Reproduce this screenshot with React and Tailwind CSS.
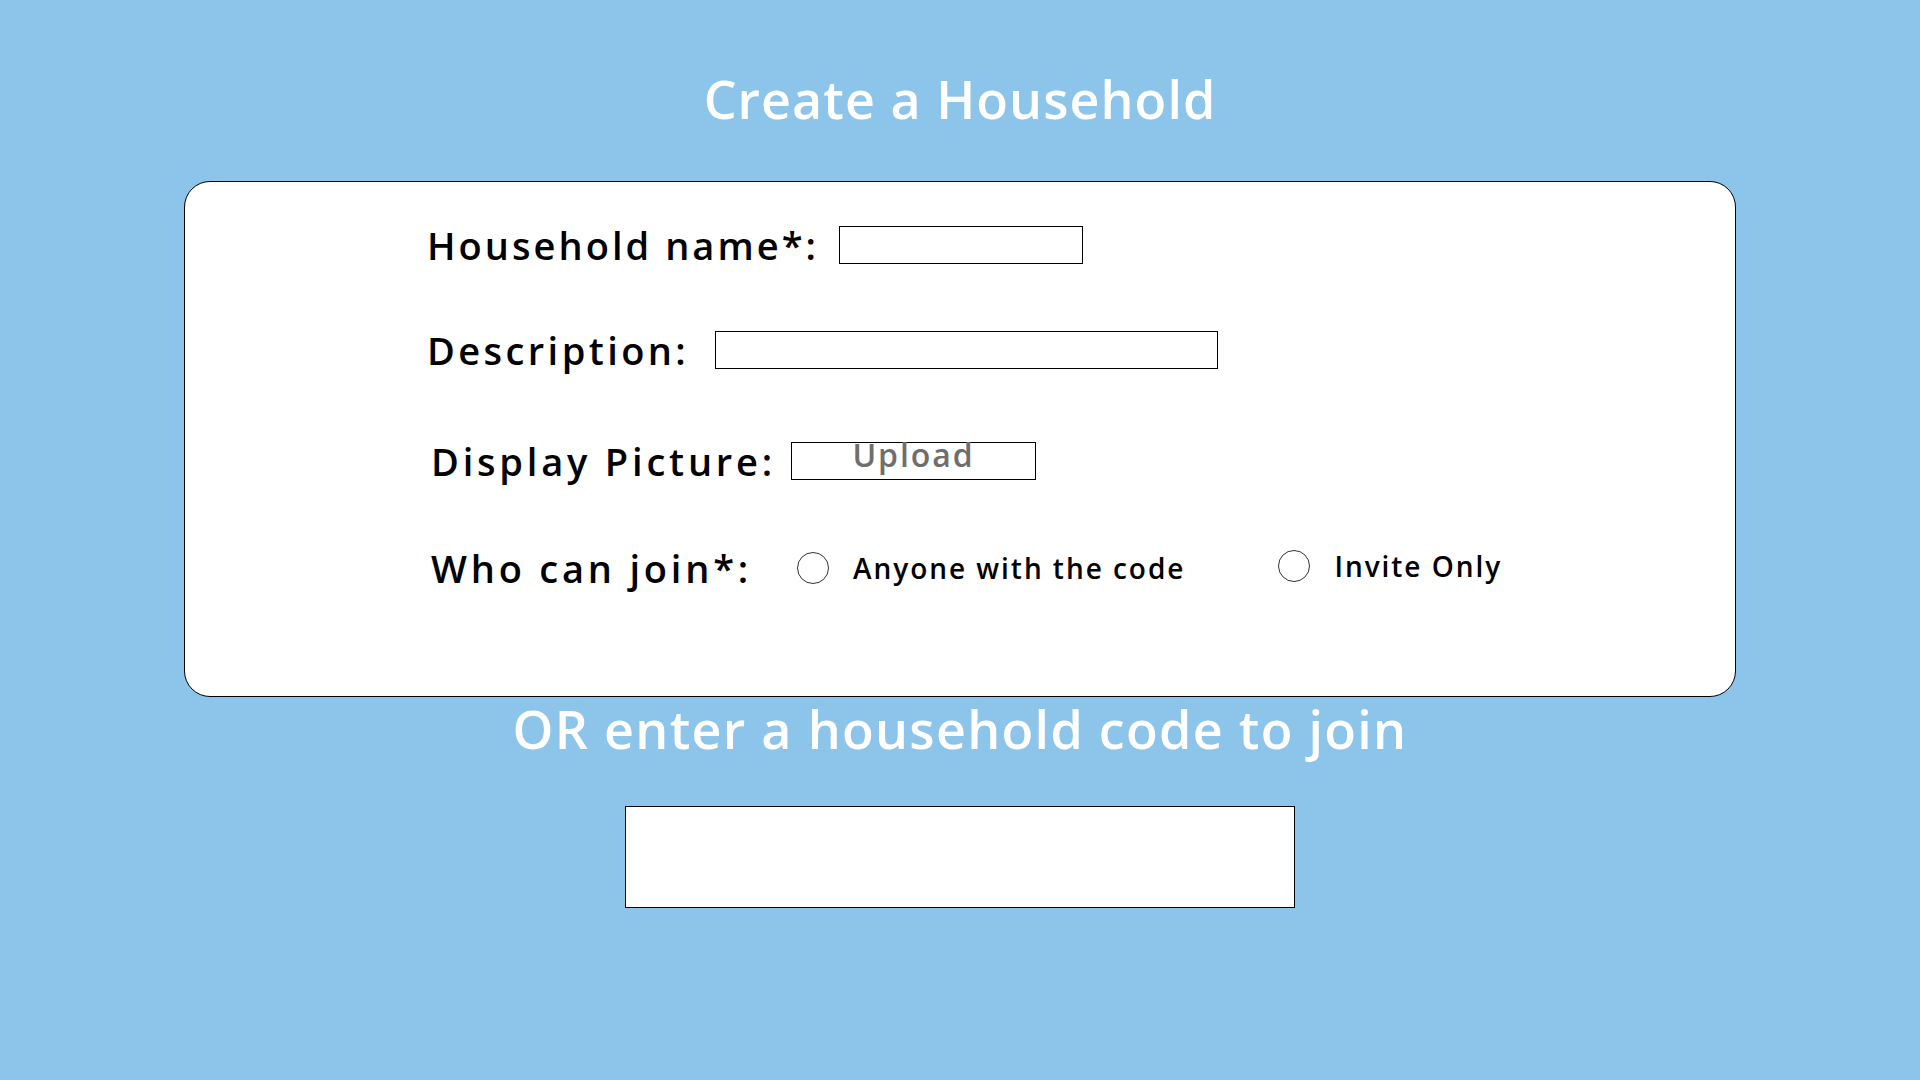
import React from "react";

function Radio({ label, className = "" }) {
  return (
    <label className={"flex items-center " + className}>
      <span className="w-[32px] h-[32px] rounded-full border border-[#333] bg-white inline-block shrink-0" />
      <span className="ml-[24px] text-[28px] tracking-[0.07em] font-semibold text-black">{label}</span>
    </label>
  );
}

export default function App() {
  return (
    <div
      className="w-full h-[1080px] bg-[#8DC4EA] flex flex-col items-center overflow-hidden"
      style={{ fontFamily: '"Open Sans", "Noto Sans", sans-serif' }}
    >
      <h1 className="mt-[62px] h-[74px] leading-[74px] text-[52px] font-semibold tracking-[0.02em] text-white">
        Create a Household
      </h1>
      <div className="mt-[45px] w-[1552px] h-[516px] bg-white border border-black rounded-[26px] pl-[242px] pt-[44px] flex flex-col">
        <div className="flex items-center h-[38px]">
          <span className="text-[38px] font-semibold tracking-[0.08em] text-black">Household name*:</span>
          <div className="ml-[20px] w-[244px] h-[38px] border border-black" />
        </div>
        <div className="flex items-center h-[38px] mt-[67px]">
          <span className="text-[38px] font-semibold tracking-[0.09em] text-black">Description:</span>
          <div className="ml-[26px] w-[503px] h-[38px] border border-black" />
        </div>
        <div className="flex items-center h-[38px] mt-[73px] pl-[4px]">
          <span className="text-[38px] font-semibold tracking-[0.1em] text-black">Display Picture:</span>
          <div className="ml-[15px] w-[245px] h-[38px] border border-black flex justify-center">
            <span className="-mt-[10px] text-[32px] leading-[44px] font-semibold tracking-[0.06em] text-[#6e6e6e]">Upload</span>
          </div>
        </div>
        <div className="flex items-center h-[38px] mt-[69px] pl-[4px]">
          <span className="text-[38px] font-semibold tracking-[0.1em] text-black">Who can join*:</span>
          <Radio label="Anyone with the code" className="ml-[45px]" />
          <Radio label="Invite Only" className="ml-[93px] -mt-[4px]" />
        </div>
      </div>
      <div className="-mt-[1px] h-[66px] leading-[66px] text-[52px] font-semibold tracking-[0.025em] text-white">
        OR enter a household code to join
      </div>
      <div className="mt-[44px] w-[670px] h-[102px] bg-white border border-black" />
    </div>
  );
}
